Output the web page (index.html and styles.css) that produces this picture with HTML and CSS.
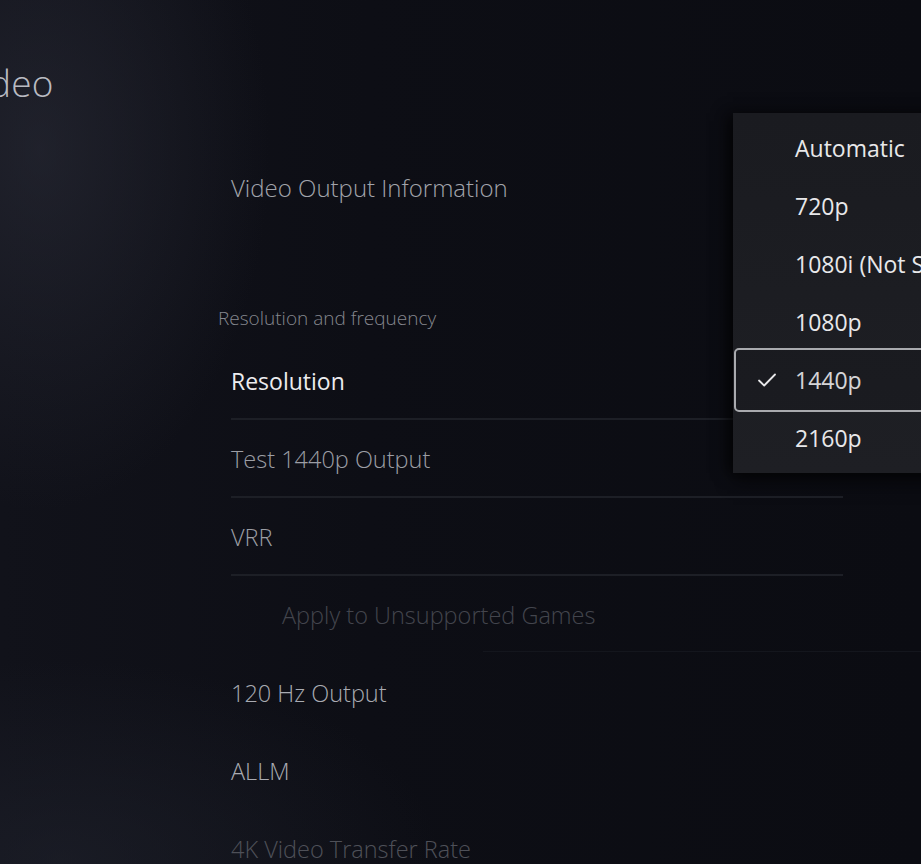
FILE: index.html
```html
<!DOCTYPE html>
<html lang="en">
<head>
<meta charset="utf-8">
<title>Video</title>
<link rel="stylesheet" href="styles.css">
</head>
<body>
<div class="screen">
  <h1 class="page-title">Video</h1>
  <div class="content">
    <div class="row row-info"><span class="label dim1">Video Output Information</span></div>
    <div class="section-title">Resolution and frequency</div>
    <div class="row sep"><span class="label bright">Resolution</span></div>
    <div class="row sep"><span class="label mid">Test 1440p Output</span></div>
    <div class="row sep sep-long"><span class="label mid">VRR</span></div>
    <div class="row sub sep-faint"><span class="label faint">Apply to Unsupported Games</span></div>
    <div class="row"><span class="label mid2">120 Hz Output</span></div>
    <div class="row"><span class="label mid2">ALLM</span></div>
    <div class="row"><span class="label faint2">4K Video Transfer Rate</span></div>
  </div>
  <ul class="menu">
    <li class="opt">Automatic</li>
    <li class="opt">720p</li>
    <li class="opt">1080i (Not Supported)</li>
    <li class="opt">1080p</li>
    <li class="opt selected"><svg class="check" viewBox="0 0 20 16" width="20" height="16"><path d="M2 8.5 L7.2 13.5 L18 2.5" fill="none" stroke="#e8e8ea" stroke-width="1.8" stroke-linecap="round" stroke-linejoin="round"/></svg>1440p</li>
    <li class="opt">2160p</li>
  </ul>
</div>
</body>
</html>
```
FILE: styles.css
```css
* { box-sizing: border-box; }
html, body { margin: 0; padding: 0; }
body {
  width: 921px;
  height: 864px;
  overflow: hidden;
  background: #0c0d14;
  font-family: "Open Sans", "Noto Sans", sans-serif;
}
.screen {
  position: relative;
  width: 921px;
  height: 864px;
  overflow: hidden;
  background:
    radial-gradient(ellipse 230px 360px at 40px 150px, rgba(44,46,58,0.55), rgba(44,46,58,0) 100%),
    radial-gradient(ellipse 380px 200px at 60px 860px, rgba(34,37,48,0.5), rgba(34,37,48,0) 100%),
    linear-gradient(90deg, #11121a 0%, #0d0e15 40%, #0b0c12 100%);
}
.page-title {
  margin: 0;
  padding-top: 60px;
  margin-left: -41px;
  font-size: 37px;
  font-weight: 300;
  line-height: 46px;
  color: #b9bbc2;
  letter-spacing: 0.2px;
}
.content {
  padding-left: 231px;
  padding-top: 56px;
}
.row {
  height: 78px;
  display: flex;
  align-items: center;
  position: relative;
}
.row-info { height: 50px; }
.label {
  font-size: 23.5px;
  font-weight: 300;
  white-space: nowrap;
}
.section-title {
  margin-left: -13px;
  margin-top: 92px;
  margin-bottom: 10px;
  height: 28px;
  line-height: 28px;
  font-size: 19px;
  font-weight: 300;
  color: #85878e;
}
.sep::after {
  content: "";
  position: absolute;
  left: 0;
  right: 78px;
  bottom: 0;
  height: 2px;
  background: #1d1f26;
}
.sep-faint::after {
  content: "";
  position: absolute;
  left: 252px;
  right: 0;
  bottom: 2px;
  height: 1px;
  background: #14161d;
}
.sub { padding-left: 51px; }
.bright { color: #ececef; font-weight: 400; font-size: 23px; }
.dim1 { color: #a2a4ab; font-size: 24px; }
.mid { color: #9c9ea5; }
.mid2 { color: #a9abb2; }
.faint { color: #43454d; }
.faint2 { color: #4e5058; }
.menu {
  position: absolute;
  left: 733px;
  top: 113px;
  width: 260px;
  margin: 0;
  padding: 6px 0;
  list-style: none;
  background: linear-gradient(180deg, #1a1b20 0%, #1e1f24 100%);
  box-shadow: -6px 0 14px rgba(0,0,0,0.6), 0 8px 16px rgba(0,0,0,0.5);
}
.opt {
  position: relative;
  height: 58px;
  display: flex;
  align-items: center;
  padding-left: 62px;
  font-size: 23px;
  font-weight: 400;
  color: #e8e8ea;
  white-space: nowrap;
}
.opt.selected::before {
  content: "";
  position: absolute;
  left: 1px;
  right: 0;
  top: -3px;
  bottom: -3px;
  border: 2px solid #a9aaae;
  border-radius: 5px;
  background: rgba(0,0,0,0.08);
}
.check {
  position: absolute;
  left: 24px;
  top: 21px;
}
```
